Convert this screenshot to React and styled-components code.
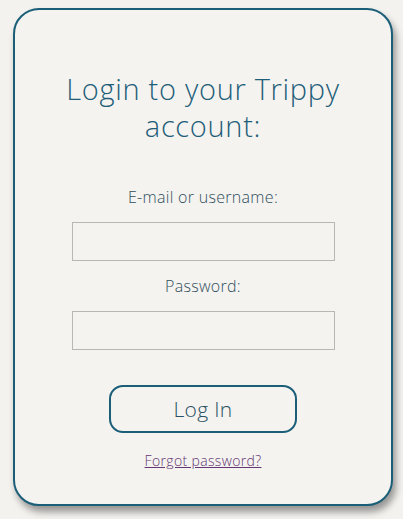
import React from "react";
import styled, { createGlobalStyle } from "styled-components";

const Global = createGlobalStyle`
  html, body { margin: 0; padding: 0; background: #f3f2ef; }
  body { font-family: "Open Sans", "Lato", sans-serif; }
`;

const Page = styled.div`
  padding: 8px 0 0 13px;
  min-height: 519px;
  box-sizing: border-box;
`;

const Card = styled.form`
  width: 380px;
  height: 498px;
  box-sizing: border-box;
  border: 2px solid #1b5e78;
  border-radius: 26px;
  background: #f4f3f0;
  box-shadow: 3px 6px 7px rgba(0, 0, 0, 0.38);
  display: flex;
  flex-direction: column;
  align-items: center;
  padding-top: 60px;
`;

const Title = styled.h1`
  margin: 0 0 43px;
  width: 340px;
  text-align: center;
  font-weight: 300;
  font-size: 29px;
  letter-spacing: 0.7px;
  line-height: 37px;
  color: #1f5e79;
`;

const Label = styled.label`
  font-size: 16px;
  line-height: 20px;
  font-weight: 300;
  letter-spacing: 0.3px;
  color: #2f4e5b;
  margin-bottom: 15px;
`;

const Input = styled.input`
  width: 263px;
  height: 39px;
  box-sizing: border-box;
  border: 1px solid #b9b7b2;
  background: #f4f3f0;
  margin-bottom: ${(p) => p.$mb}px;
  outline: none;
`;

const Button = styled.button`
  width: 188px;
  height: 48px;
  box-sizing: border-box;
  border: 2px solid #1b5e78;
  border-radius: 14px;
  background: transparent;
  font-family: inherit;
  font-size: 21px;
  font-weight: 300;
  letter-spacing: 0.3px;
  color: #2a5162;
  margin-bottom: 19px;
  cursor: pointer;
`;

const Link = styled.a`
  font-size: 14px;
  line-height: 18px;
  font-weight: 300;
  letter-spacing: 0.35px;
  color: #643673;
  text-decoration: underline;
`;

export default function App() {
  return (
    <>
      <Global />
      <Page>
        <Card onSubmit={(e) => e.preventDefault()}>
          <Title>Login to your Trippy account:</Title>
          <Label htmlFor="user">E-mail or username:</Label>
          <Input id="user" type="text" $mb={15} />
          <Label htmlFor="pass">Password:</Label>
          <Input id="pass" type="password" $mb={35} />
          <Button type="submit">Log In</Button>
          <Link href="#">Forgot password?</Link>
        </Card>
      </Page>
    </>
  );
}
